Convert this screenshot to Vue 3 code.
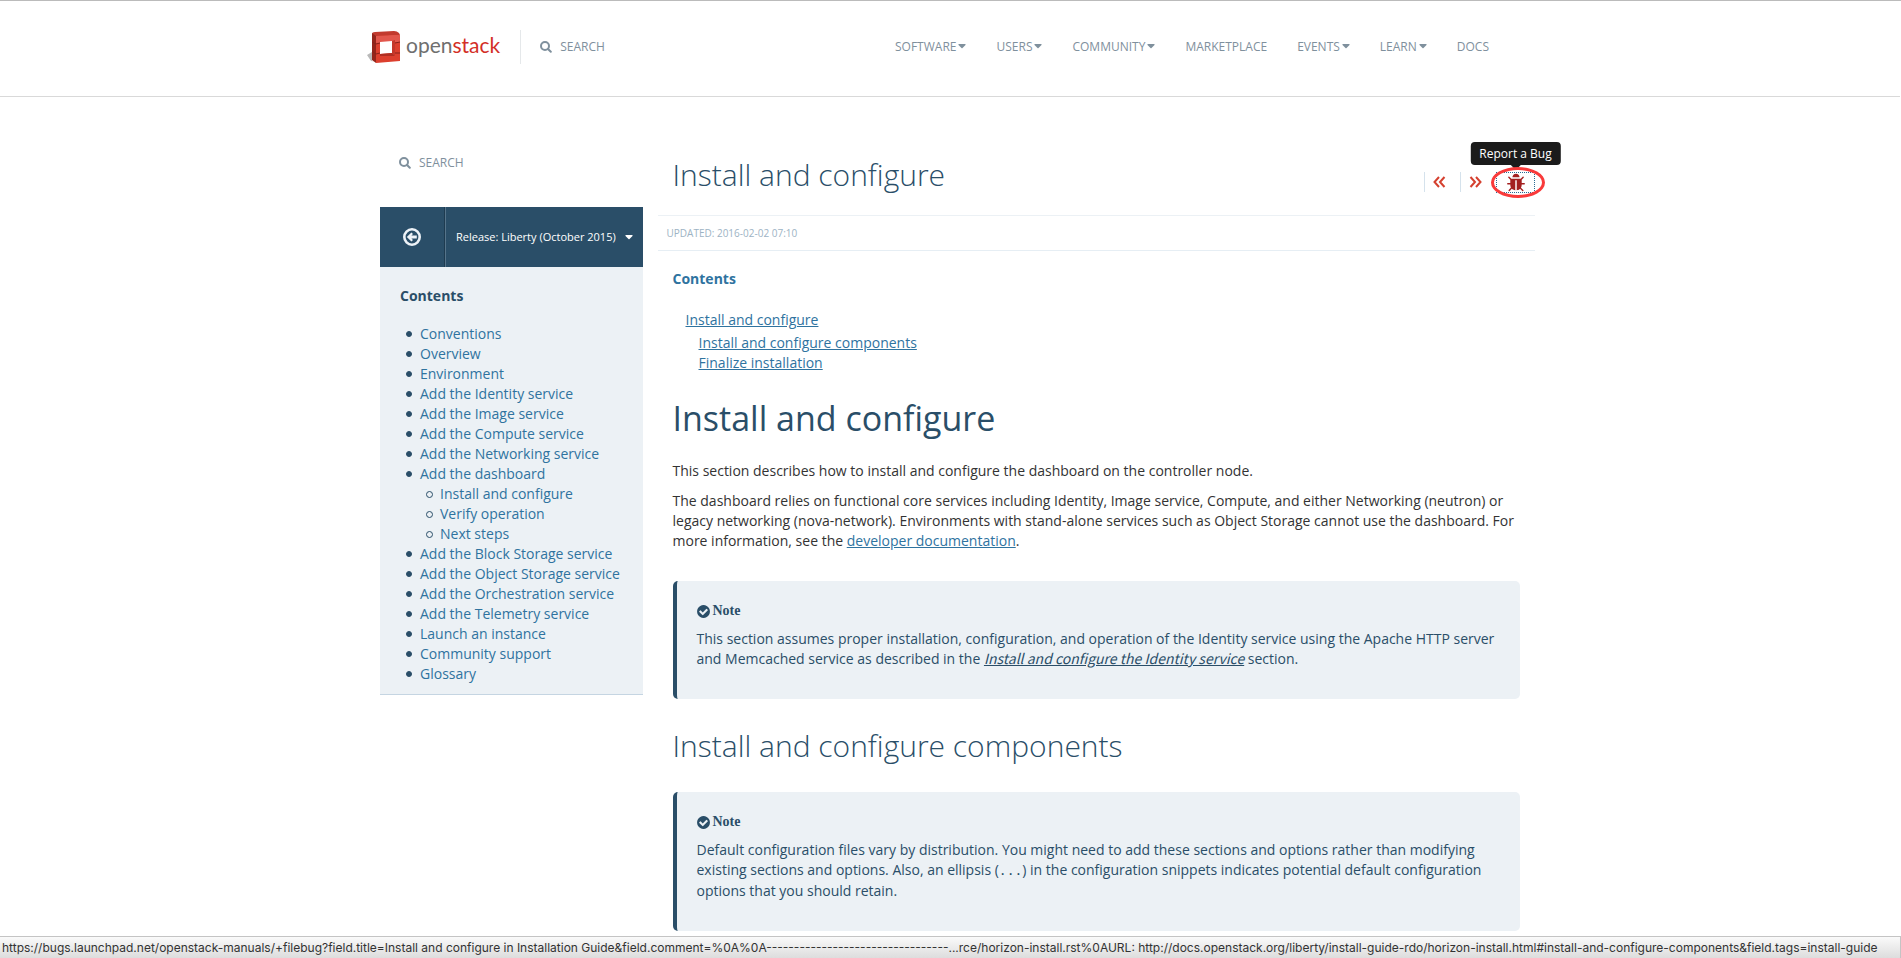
<script setup>
import { ref } from 'vue'

const nav = [
  { label: 'SOFTWARE', menu: true },
  { label: 'USERS', menu: true },
  { label: 'COMMUNITY', menu: true },
  { label: 'MARKETPLACE', menu: false },
  { label: 'EVENTS', menu: true },
  { label: 'LEARN', menu: true },
  { label: 'DOCS', menu: false },
]

const chapters = [
  { label: 'Conventions' },
  { label: 'Overview' },
  { label: 'Environment' },
  { label: 'Add the Identity service' },
  { label: 'Add the Image service' },
  { label: 'Add the Compute service' },
  { label: 'Add the Networking service' },
  {
    label: 'Add the dashboard',
    children: ['Install and configure', 'Verify operation', 'Next steps'],
  },
  { label: 'Add the Block Storage service' },
  { label: 'Add the Object Storage service' },
  { label: 'Add the Orchestration service' },
  { label: 'Add the Telemetry service' },
  { label: 'Launch an instance' },
  { label: 'Community support' },
  { label: 'Glossary' },
]

const release = ref('liberty')

const statusUrl =
  'https://bugs.launchpad.net/openstack-manuals/+filebug?field.title=Install and configure in Installation Guide&field.comment=%0A%0A' +
  '-'.repeat(33) +
  '...rce/horizon-install.rst%0AURL: http://docs.openstack.org/liberty/install-guide-rdo/horizon-install.html#install-and-configure-components&field.tags=install-guide'

const checkPath =
  'M1412 734q0-28-18-46l-91-90q-19-19-45-19t-45 19l-408 407-226-226q-19-19-45-19t-45 19l-91 90q-18 18-18 46 0 27 18 45l362 362q19 19 45 19 27 0 46-19l543-543q18-18 18-45zm252 162q0 209-103 385.5t-279.5 279.5-385.5 103-385.5-103-279.5-279.5-103-385.5 103-385.5 279.5-279.5 385.5-103 385.5 103 279.5 279.5 103 385.5z'
const bugPath =
  'M1696 960q0 26-19 45t-45 19h-224q0 171-67 290l208 209q19 19 19 45t-19 45q-18 19-45 19t-45-19l-198-197q-5 5-15 13t-42 28.5-65 36.5-82 29-97 13v-896h-128v896q-51 0-101.5-13.5t-87-33-66-39-43.5-32.5l-15-14-183 207q-20 21-48 21-24 0-43-16-19-18-20.5-44.5t15.5-46.5l202-227q-58-114-58-274h-224q-26 0-45-19t-19-45 19-45 45-19h224v-294l-173-173q-19-19-19-45t19-45 45-19 45 19l173 173h844l173-173q19-19 45-19t45 19 19 45-19 45l-173 173v294h224q26 0 45 19t19 45zm-480-576h-640q0-133 93.5-226.5t226.5-93.5 226.5 93.5 93.5 226.5z'
</script>

<template>
  <div class="page">
    <header class="site-header">
      <div class="container header-row">
        <a class="brand" href="#" aria-label="OpenStack home">
          <svg class="brand-mark" width="34" height="33" viewBox="0 0 34 33" aria-hidden="true">
            <path d="M0 25 L5 22 V31 L9 32 L4 31 Z" fill="#b9b9b9" />
            <path d="M5 4 Q5 2 8 2 L27 1 Q30 1 32 3 L33 5 L9 7 Z" fill="#c23a2e" />
            <path d="M5 3 L9 6 V33 L5 30 Z" fill="#94251b" />
            <path d="M9 6 L33 5 V31 L9 33 Z" fill="#dc3f2e" />
            <path d="M9 6 L33 5 V12 L9 13 Z" fill="#e2574c" />
            <path d="M13 12 L25 11 V23 L13 24 Z" fill="#ffffff" />
            <path d="M13 24 L25 23 L28 26 L13 26 Z" fill="#b02e22" />
            <path d="M25 11 L28 10 V26 L25 23 Z" fill="#c4382b" />
            <path d="M5 12 L9 14 L13 13 M28 13 L33 12 M5 21 L9 24 L13 23 M28 23 L33 23" fill="none" stroke="#86231b" stroke-width="1" />
          </svg>
          <span class="brand-text">open<b>stack</b></span>
        </a>
        <button class="search header-search" type="button">
          <svg width="12" height="12" viewBox="0 0 12 12" aria-hidden="true"><circle cx="5" cy="5" r="4" /><path d="M8 8 L10.800 10.800" /></svg>
          <span>SEARCH</span>
        </button>
        <nav class="main-nav" aria-label="Main">
          <a v-for="item in nav" :key="item.label" href="#">
            <span>{{ item.label }}</span>
            <svg v-if="item.menu" width="8" height="5" viewBox="0 0 8 5" aria-hidden="true"><path d="M1 0H7Q8 0 7.500 1L4.500 4Q4 4.500 3.500 4L.5 1Q0 0 1 0Z" fill="currentColor" /></svg>
          </a>
        </nav>
      </div>
    </header>

    <div class="container layout">
      <aside class="sidebar">
        <button class="search side-search" type="button">
          <svg width="12" height="12" viewBox="0 0 12 12" aria-hidden="true"><circle cx="5" cy="5" r="4" /><path d="M8 8 L10.800 10.800" /></svg>
          <span>SEARCH</span>
        </button>
        <div class="release">
          <a class="back" href="#" aria-label="Back to index">
            <svg width="18" height="18" viewBox="0 0 18 18" aria-hidden="true">
              <circle cx="9" cy="9" r="7.700" fill="none" stroke="currentColor" stroke-width="2.600" />
              <path d="M3.800 9 L8.400 4.400 L10 6 L8.400 7.500 H13.800 V10.500 H8.400 L10 12 L8.400 13.600 Z" fill="currentColor" />
            </svg>
          </a>
          <div class="release-pick">
            <select v-model="release" aria-label="Release">
              <option value="liberty">Release: Liberty (October 2015)</option>
            </select>
            <svg width="8" height="5" viewBox="0 0 8 5" aria-hidden="true"><path d="M1 0H7Q8 0 7.500 1L4.500 4Q4 4.500 3.500 4L.5 1Q0 0 1 0Z" fill="currentColor" /></svg>
          </div>
        </div>
        <nav class="toc" aria-label="Guide contents">
          <h2>Contents</h2>
          <ul>
            <li v-for="chapter in chapters" :key="chapter.label">
              <a href="#">{{ chapter.label }}</a>
              <ul v-if="chapter.children">
                <li v-for="child in chapter.children" :key="child"><a href="#">{{ child }}</a></li>
              </ul>
            </li>
          </ul>
        </nav>
      </aside>

      <main class="main">
        <div class="title-row">
          <h1 class="light-title">Install and configure</h1>
          <div class="actions">
            <a class="action" href="#" aria-label="Previous page">
              <svg width="13" height="12" viewBox="0 0 13 12" aria-hidden="true"><path d="M6 1 L1.500 6 L6 11 M11.500 1 L7 6 L11.500 11" /></svg>
            </a>
            <a class="action" href="#" aria-label="Next page">
              <svg width="13" height="12" viewBox="0 0 13 12" aria-hidden="true"><path d="M1.500 1 L6 6 L1.500 11 M7 1 L11.500 6 L7 11" /></svg>
            </a>
            <a class="bug" href="#" aria-describedby="bug-tip" aria-label="Report a bug">
              <svg width="20" height="20" viewBox="0 0 1792 1792" aria-hidden="true"><path :d="bugPath" fill="#a31f1f" /></svg>
              <span id="bug-tip" class="tooltip" role="tooltip">Report a Bug</span>
              <span class="marker"></span>
            </a>
          </div>
        </div>
        <p class="updated">UPDATED: 2016-02-02 07:10</p>

        <article class="doc">
          <h2 class="contents-title"><a href="#">Contents</a></h2>
          <ul class="local-toc">
            <li>
              <a href="#">Install and configure</a>
              <ul>
                <li><a href="#">Install and configure components</a></li>
                <li><a href="#">Finalize installation</a></li>
              </ul>
            </li>
          </ul>

          <h1 class="doc-title">Install and configure</h1>
          <p>This section describes how to install and configure the dashboard on the controller node.</p>
          <p>
            The dashboard relies on functional core services including Identity, Image service, Compute, and either
            Networking (neutron) or legacy networking (nova-network). Environments with stand-alone services such as
            Object Storage cannot use the dashboard. For more information, see the
            <a href="#">developer documentation</a>.
          </p>

          <section class="note">
            <h3><svg width="15" height="15" viewBox="0 0 1792 1792" aria-hidden="true"><path :d="checkPath" fill="currentColor" /></svg><span>Note</span></h3>
            <p>
              This section assumes proper installation, configuration, and operation of the Identity service using the
              Apache HTTP server and Memcached service as described in the
              <a href="#"><em>Install and configure the Identity service</em></a> section.
            </p>
          </section>

          <h2 class="light-title section-title">Install and configure components</h2>

          <section class="note">
            <h3><svg width="15" height="15" viewBox="0 0 1792 1792" aria-hidden="true"><path :d="checkPath" fill="currentColor" /></svg><span>Note</span></h3>
            <p>
              Default configuration files vary by distribution. You might need to add these sections and options rather
              than modifying existing sections and options. Also, an ellipsis (<code>...</code>) in the configuration
              snippets indicates potential default configuration options that you should retain.
            </p>
          </section>
        </article>
      </main>
    </div>

    <div class="status-bar" role="status">{{ statusUrl }}</div>
  </div>
</template>

<style>
body {
  background: #ffffff;
}
</style>

<style scoped>
.page {
  font-family: "Open Sans", "Noto Sans", sans-serif;
  font-size: 14px;
  line-height: 20px;
  color: #333333;
  padding-right: 1px;
  border-top: 1px solid #bbbbbb;
}
h1, h2, h3, p, ul {
  margin: 0;
  padding: 0;
}
a {
  color: #2f739f;
}
button {
  font: inherit;
  border: 0;
  background: none;
  padding: 0;
  cursor: pointer;
}
.container {
  box-sizing: border-box;
  max-width: 1170px;
  margin: 0 auto;
}

.site-header {
  border-bottom: 1px solid #d9d9d9;
}
.header-row {
  display: flex;
  align-items: center;
  height: 95px;
  padding: 0 46px 4px 2px;
}
.brand {
  display: flex;
  align-items: center;
  gap: 5px;
  text-decoration: none;
}
.brand-text {
  font-family: Lato, "Open Sans", sans-serif;
  font-size: 21px;
  line-height: 32px;
  color: #6f6f6f;
  padding-bottom: 3px;
}
.brand-text b {
  font-weight: 400;
  color: #d32f27;
}
.search {
  display: flex;
  align-items: center;
  gap: 8px;
  font-size: 12px;
  line-height: 20px;
  color: #7f909d;
}
.search svg {
  fill: none;
  stroke: currentColor;
  stroke-width: 2;
  stroke-linecap: round;
}
.header-search {
  margin-left: 20px;
  padding: 7px 0 7px 19px;
  border-left: 1px solid #e5e8ea;
}
.main-nav {
  display: flex;
  gap: 30px;
  margin-left: auto;
}
.main-nav a {
  display: flex;
  align-items: center;
  gap: 2px;
  font-size: 12px;
  color: #7f909d;
  text-decoration: none;
}

.layout {
  display: grid;
  grid-template-columns: 1fr 3fr;
}
.sidebar {
  padding: 56px 15px 0;
}
.side-search {
  padding: 0 0 0 19px;
}
.release {
  display: flex;
  height: 60px;
  margin-top: 34px;
  background: #2a4e68;
  color: #ffffff;
}
.back {
  display: flex;
  align-items: center;
  justify-content: center;
  width: 64px;
  border-right: 1px solid #1e3b50;
  color: #edf2f7;
}
.release-pick {
  flex: 1;
  display: flex;
  align-items: center;
  justify-content: space-between;
  padding: 0 10px;
  border-left: 1px solid #56748a;
}
.release-pick select {
  appearance: none;
  border: 0;
  padding: 0;
  background: transparent;
  color: #ffffff;
  font: 11px/20px "Open Sans", "Noto Sans", sans-serif;
}
.toc {
  padding: 14px 0 10px 20px;
  background: #ecf1f5;
  border-bottom: 1px solid #c5d5e2;
  color: #2a4e68;
}
.toc h2 {
  font-size: 14px;
  line-height: 20px;
  font-weight: 700;
  padding-bottom: 18px;
  padding-top: 5px;
}
.toc ul {
  padding-left: 20px;
}
.toc li {
  list-style: none;
}
.toc li::before {
  content: "";
  display: inline-block;
  box-sizing: border-box;
  width: 6px;
  height: 6px;
  margin: 0 8px 2px -14px;
  border: 1px solid #2a4e68;
  border-radius: 50%;
  background: #2a4e68;
  vertical-align: middle;
}
.toc li li::before {
  width: 7px;
  height: 7px;
  margin-right: 7px;
  background: transparent;
}
.toc a {
  text-decoration: none;
}

.main {
  min-width: 0;
}
.title-row {
  display: flex;
  justify-content: space-between;
  padding: 58px 0 20px 15px;
  border-bottom: 1px solid #ecf1f5;
}
.light-title {
  font-size: 30px;
  line-height: 40px;
  font-weight: 300;
  color: #2a4e68;
}
.actions {
  display: flex;
  align-self: flex-start;
  margin-top: 17px;
}
.action {
  display: flex;
  align-items: center;
  width: 27px;
  height: 20px;
  padding-left: 8px;
  border-left: 1px solid #d5e2ec;
}
.action svg path {
  fill: none;
  stroke: #d5402f;
  stroke-width: 2;
}
.bug {
  position: relative;
  display: flex;
  align-items: center;
  justify-content: center;
  width: 37px;
  height: 19px;
  border: 1px dotted #2a6a92;
}
.tooltip {
  position: absolute;
  bottom: 27px;
  left: 50%;
  transform: translateX(-50%);
  padding: 2px 9px 1px;
  border-radius: 4px;
  background: #1b1b1b;
  color: #ffffff;
  font-size: 12px;
  line-height: 20px;
  white-space: nowrap;
}
.tooltip::after {
  content: "";
  position: absolute;
  top: 100%;
  left: 50%;
  margin-left: -5px;
  border: 5px solid transparent;
  border-top-color: #1b1b1b;
}
.marker {
  position: absolute;
  inset: -6px -11px -6px -6px;
  border: 3px solid #f93a3a;
  border-radius: 50%;
}
.updated {
  padding: 7px 9px 7px;
  font-size: 10px;
  border-bottom: 1px solid #e6eef4;
  color: #9db3c4;
}
.doc {
  padding: 18px 15px 0 15px;
}
.contents-title {
  font-size: 14px;
  line-height: 20px;
}
.contents-title a {
  text-decoration: none;
}
.local-toc {
  padding: 21px 0 0 13px;
}
.local-toc ul {
  padding: 3px 0 0 13px;
}
.local-toc li {
  list-style: none;
}
.doc-title {
  font-size: 34px;
  line-height: 40px;
  font-weight: 400;
  color: #2a4e68;
  padding: 25px 0 23px;
}
.doc p {
  margin-bottom: 10px;
}
.note {
  margin-top: 30px;
  padding: 20px;
  border-left: 4px solid #2a4e68;
  border-radius: 5px;
  background: #ecf1f5;
  color: #2a4e68;
}
.note h3 {
  display: flex;
  align-items: center;
  gap: 2px;
  margin-left: -1px;
  padding-bottom: 8px;
  font: 700 14px/20px "Liberation Serif", serif;
}
.note a {
  color: #2a4e68;
}
.note em {
  font-family: "Noto Sans CJK SC", "Open Sans", sans-serif;
  line-height: 16px;
}
.note code {
  font-family: "DejaVu Sans Mono", monospace;
  font-size: 13px;
}
.section-title {
  padding-top: 27px;
}
.section-title + .note {
  margin-top: 26px;
}

.status-bar {
  position: fixed;
  left: 0;
  right: 0;
  bottom: 0;
  padding: 1px 2px 0;
  border-top: 1px solid #c4c4c4;
  border-right: 1px solid #c4c4c4;
  background: linear-gradient(#fafafa, #dddddd);
  color: #333333;
  font-family: Inter, "Open Sans", sans-serif;
  font-size: 12px;
  line-height: 20px;
  white-space: nowrap;
  overflow: hidden;
}
</style>
